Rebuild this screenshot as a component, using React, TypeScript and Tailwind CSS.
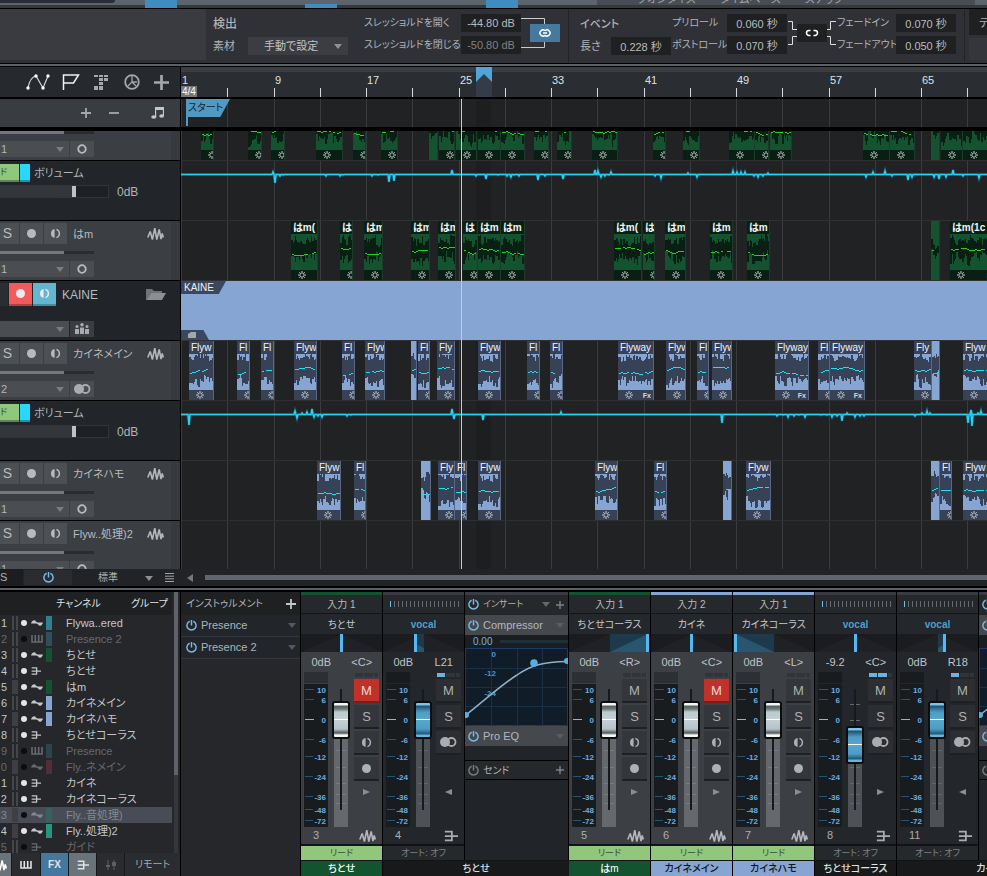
import { useId, useState, type ReactNode } from "react";
import clsx from "clsx";

const BAR_STEP = 46.25;
const GRID = Array.from({ length: 44 }, (_, i) => Math.round(i * BAR_STEP));

type Tone = "green" | "blue";
type ClipData = { x: number; w: number; solid?: boolean; fx?: boolean; label?: string };

const TONES = {
  green: { bg: "bg-[#0a1f13]", edge: "border-[#1d3a2a]", wave: "#14532f", pitch: "#1fd41f" },
  blue: { bg: "bg-[#374256]", edge: "border-[#56678a]", wave: "#86a5d2", pitch: "#19e3f0" },
};

const CHITOSE: ClipData[] = [
  { x: 20, w: 13 }, { x: 67, w: 14 }, { x: 90, w: 14 }, { x: 135, w: 27 }, { x: 172, w: 13 },
  { x: 200, w: 17 }, { x: 248, w: 9, solid: true }, { x: 258, w: 16 }, { x: 275, w: 21 }, { x: 297, w: 23 },
  { x: 320, w: 24 }, { x: 353, w: 15 }, { x: 376, w: 15 }, { x: 411, w: 26 }, { x: 472, w: 13 },
  { x: 502, w: 17 }, { x: 548, w: 26 }, { x: 574, w: 14 }, { x: 589, w: 22 }, { x: 682, w: 27 },
  { x: 709, w: 25 }, { x: 750, w: 9, solid: true }, { x: 760, w: 22 }, { x: 782, w: 26 },
];

const HAM: ClipData[] = [
  { x: 110, w: 27 }, { x: 159, w: 13 }, { x: 183, w: 19 }, { x: 230, w: 19 }, { x: 257, w: 18 },
  { x: 282, w: 15 }, { x: 297, w: 23 }, { x: 320, w: 24 }, { x: 433, w: 28 }, { x: 462, w: 12 },
  { x: 484, w: 21 }, { x: 529, w: 23 }, { x: 566, w: 23 }, { x: 750, w: 9, solid: true },
  { x: 769, w: 48, fx: true, label: "はm(1c" },
];

const KAINE_MAIN: ClipData[] = [
  { x: 8, w: 25 }, { x: 56, w: 13 }, { x: 80, w: 13 }, { x: 113, w: 23 }, { x: 161, w: 13 },
  { x: 184, w: 20 }, { x: 230, w: 6, solid: true }, { x: 237, w: 12 }, { x: 256, w: 18 }, { x: 297, w: 23 },
  { x: 346, w: 13 }, { x: 369, w: 13 }, { x: 437, w: 36, fx: true }, { x: 485, w: 20 }, { x: 516, w: 12 },
  { x: 531, w: 20 }, { x: 594, w: 34, fx: true }, { x: 637, w: 12 }, { x: 649, w: 35, fx: true },
  { x: 733, w: 18 }, { x: 751, w: 8, solid: true }, { x: 782, w: 30 },
];

const KAINE_HARMONY: ClipData[] = [
  { x: 136, w: 24 }, { x: 173, w: 12 }, { x: 240, w: 10, solid: true }, { x: 257, w: 17 }, { x: 274, w: 12 },
  { x: 297, w: 23 }, { x: 414, w: 23 }, { x: 473, w: 13 }, { x: 542, w: 9, solid: true }, { x: 565, w: 25 },
  { x: 750, w: 9, solid: true }, { x: 759, w: 12 }, { x: 782, w: 30 },
];

const VOLUME_1: number[][] = [
  [92, -2], [94, 9], [99, 2], [102, 1], [145, 2], [159, 2], [162, 1], [191, 2], [197, 1], [208, 8], [213, 7],
  [271, -4], [295, 2], [305, 5], [317, 1], [326, 2], [330, 3], [333, 1], [338, 2], [357, 6], [364, 2], [382, 5],
  [414, -4], [417, -3], [420, 3], [424, 2], [428, 1], [430, -2], [474, 2], [480, 4], [507, -1], [516, 3],
  [552, -3], [556, -2], [560, -2], [564, -2], [573, 2], [577, 3], [582, 2], [587, -1], [685, 3], [692, -2],
  [704, -3], [711, 2], [727, 6], [731, 3], [753, 3], [758, 5], [765, 3], [772, -4], [782, 2], [798, 4],
];

const VOLUME_2: number[][] = [
  [8, 11], [114, -3], [116, 4], [121, -1], [126, -2], [131, -5], [133, 3], [137, 2], [141, 3], [166, 2], [170, 1],
  [271, -5], [273, 5], [302, 6], [380, -2], [541, 9], [596, 2], [602, 1], [607, 3], [613, 2], [618, 1], [624, 3],
  [640, 1], [646, 1], [651, 3], [656, 2], [661, 7], [666, -1], [674, 3], [679, 2], [683, 2], [734, 2], [741, -1],
  [746, -3], [749, -1], [787, 9], [790, -4], [791, 12], [797, -1], [800, -3],
];

function noise(n: number) {
  const v = Math.sin(n * 127.1 + 3.7) * 43758.5453;
  return v - Math.floor(v);
}

function edgePath(seed: number, w: number, h: number, base: number, spread: number, bottom: boolean) {
  let d = bottom ? `M0 ${h}` : "M0 0";
  for (let i = 0; i < w; i++) {
    const env = base + noise(seed + Math.floor(i / 4)) * spread * 0.6;
    const len = Math.max(0, Math.round(env + (noise(seed * 3 + Math.floor(i / 1.5)) - 0.4) * spread));
    d += `V${bottom ? h - len : len}h1`;
  }
  return `${d}V${bottom ? h : 0}Z`;
}

function pitchPath(seed: number, w: number, mid: number) {
  let d = "";
  let y = mid + Math.round((noise(seed) - 0.5) * 6);
  for (let i = 1; i < w - 2; i += 2) {
    y += Math.round((noise(seed + i * 1.7) - 0.5) * 3);
    y = Math.min(mid + 4, Math.max(mid - 4, y));
    if (noise(seed * 2 + i) > 0.12) d += `M${i} ${y + 0.5}h2`;
  }
  return d;
}

function automationPath(points: number[][]) {
  let d = "M0 13.5";
  for (const [x, dy] of points) d += `L${x - 1} 13.5L${x} ${13 + dy}L${x + 1} 13.5`;
  return `${d}H3000`;
}

// short clips only have room for the first letters of the event name
function clipTitle(tone: Tone, w: number) {
  if (tone === "green") return w < 17 ? "は" : w < 26 ? "はm" : "はm(";
  if (w < 16) return "Fl";
  if (w < 20) return "Fly";
  return w < 32 ? "Flyw" : "Flyway";
}

function Gear() {
  return (
    <svg viewBox="0 0 8 8" className="h-2 w-2 shrink-0" fill="none" stroke="#c6cbd0">
      <circle cx="4" cy="4" r="2.2" />
      <path d="M4 0v1M4 7v1M0 4h1M7 4h1M1.2 1.2l.7.7M6.1 6.1l.7.7M1.2 6.8l.7-.7M6.1 1.9l.7-.7" />
    </svg>
  );
}

function WaveIcon({ className = "text-[#b4b7ba]" }: { className?: string }) {
  return (
    <svg viewBox="0 0 17 14" className={clsx("h-3.5 w-[17px] shrink-0", className)} fill="none" stroke="currentColor" strokeWidth="1.6" strokeLinejoin="bevel">
      <path d="M.8 10.500L3.200 4.500L5.400 12.500L7.800 1.200L9.800 12.500L12.200 2.500L14 12L15.200 6.500L16.300 10.500" />
    </svg>
  );
}

function BusIcon({ className = "h-3 w-4" }: { className?: string }) {
  return (
    <svg viewBox="0 0 16 12" className={clsx("shrink-0", className)} fill="none" stroke="currentColor" strokeWidth="2">
      <path d="M1 1h8v10H1M1 6h15" />
    </svg>
  );
}

function PianoIcon() {
  return (
    <svg viewBox="0 0 12 8" className="h-2 w-3 shrink-0" fill="none" stroke="currentColor" strokeWidth="1.6">
      <path d="M1 0v7h10V0M4.3 0v7M7.7 0v7" />
    </svg>
  );
}

function SineIcon() {
  return (
    <svg viewBox="0 0 12 8" className="h-2 w-3 shrink-0" fill="currentColor">
      <path d="M0 4.600C1 1 4 .4 5 2.400C5.600 3.600 6.400 3.400 12 3.400C11 7 8 7.600 7 5.600C6.400 4.400 5.600 4.600 0 4.600Z" />
    </svg>
  );
}

function MonitorIcon() {
  return (
    <svg viewBox="0 0 12 12" className="h-[11px] w-[11px]">
      <path d="M5 1.200a4.900 4.900 0 0 0 0 9.600Z" fill="currentColor" />
      <path d="M7 1.600a4.600 4.600 0 0 1 0 8.800" fill="none" stroke="currentColor" strokeWidth="1.500" />
    </svg>
  );
}

function StereoIcon({ stereo = true }: { stereo?: boolean }) {
  if (!stereo) {
    return (
      <svg viewBox="0 0 10 10" className="h-[10px] w-[10px]" fill="none" stroke="#b8bbbe" strokeWidth="1.800">
        <circle cx="5" cy="5" r="3.800" />
      </svg>
    );
  }
  return (
    <svg viewBox="0 0 17 10" className="h-[10px] w-[17px]">
      <circle cx="5" cy="5" r="5" fill="#aaadb0" />
      <circle cx="11.500" cy="5" r="4" fill="none" stroke="#aaadb0" strokeWidth="1.800" />
    </svg>
  );
}

function PowerIcon({ className = "text-[#78b9e4]" }: { className?: string }) {
  return (
    <svg viewBox="0 0 12 12" className={clsx("h-[11px] w-[11px] shrink-0", className)} fill="none" stroke="currentColor" strokeWidth="1.600">
      <path d="M4 1.400a5 5 0 1 0 4 0M6 0v6" />
    </svg>
  );
}

function PlusIcon({ className }: { className: string }) {
  return (
    <svg viewBox="0 0 10 10" className={clsx("shrink-0", className)} fill="none" stroke="currentColor" strokeWidth="1.800">
      <path d="M5 0v10M0 5h10" />
    </svg>
  );
}

function Caret({ className, color = "text-[#797c80]" }: { className?: string; color?: string }) {
  return (
    <svg viewBox="0 0 8 5" className={clsx("pointer-events-none h-[5px] w-2 shrink-0", color, className)} fill="currentColor">
      <path d="M0 0h8L4 5Z" />
    </svg>
  );
}

function LinkIcon({ broken = false }: { broken?: boolean }) {
  return (
    <svg viewBox="0 0 14 8" className="h-2 w-3.5" fill="none" stroke="currentColor" strokeWidth="1.500">
      {broken ? (
        <path d="M5.500 1.500H4a2.500 2.500 0 0 0 0 5h1.500M8.500 1.500H10a2.500 2.500 0 0 1 0 5H8.500" />
      ) : (
        <path d="M7 1.800A3 3 0 1 0 7 6.200M7 1.800A3 3 0 1 1 7 6.200M5 4h4" />
      )}
    </svg>
  );
}

function ValueField({ label, value, dim }: { label: string; value: string; dim?: boolean }) {
  return (
    <input
      aria-label={label}
      defaultValue={value}
      className={clsx(
        "h-[18px] w-[60px] shrink-0 bg-[#1f2022] text-center text-[11px] outline-none",
        dim ? "text-[#7e8185]" : "text-[#b9bcbf]",
      )}
    />
  );
}

function TopStrip() {
  return (
    <div className="flex h-[9px] shrink-0 items-start overflow-hidden border-b border-black bg-[#34393e] text-[11px]">
      <div className="flex h-[5px] w-full bg-[#5d656c]">
        <div className="h-[3px] w-[115px] shrink-0 rounded-br bg-[#2b2c36]" />
        <div className="ml-[30px] h-2 w-8 shrink-0 bg-[#3f8dc0]" />
        <div className="ml-32 h-2 w-8 shrink-0 border-t-4 border-[#5d656c] bg-[#3f8dc0]" />
        <div className="ml-[149px] h-2 w-8 shrink-0 bg-[#3f8dc0]" />
        <div className="ml-[79px] flex h-[5px] flex-1 items-end gap-6 bg-[#484d54] pl-10 leading-[12px] text-[#a0a4a8]">
          <span>クオンタイズ</span>
          <span>タイムベース</span>
          <span>スナップ</span>
        </div>
        <div className="h-[5px] w-3 shrink-0 bg-[#5d656c]" />
      </div>
    </div>
  );
}

function DetectionPanel() {
  return (
    <div className="flex h-[54px] shrink-0 overflow-hidden bg-[#303137] text-[11px] whitespace-nowrap text-[#b0b3b6]">
      <div className="mb-[3px] w-[206px] shrink-0 bg-[#3a3b40]" />
      <div className="flex w-[363px] shrink-0 border-r border-[#232428] pt-[5px]">
        <div className="ml-[7px] w-[151px] shrink-0">
          <h2 className="h-5 text-[12px] leading-5 font-medium">検出</h2>
          <div className="mt-[3px] flex items-center">
            <label htmlFor="material" className="w-[35px]">素材</label>
            <div className="relative">
              <select id="material" className="block h-[18px] w-[100px] appearance-none bg-[#3c3d42] pl-4 text-[#c0c3c6] outline-none">
                <option>手動で設定</option>
              </select>
              <Caret className="absolute top-[7px] right-1.5" color="text-[#8f9295]" />
            </div>
          </div>
        </div>
        <div className="flex w-[97px] shrink-0 flex-col gap-1 text-[10px] leading-[18px]">
          <span>スレッショルドを開く</span>
          <span>スレッショルドを閉じる</span>
        </div>
        <div className="flex flex-col gap-1">
          <ValueField label="スレッショルドを開く" value="-44.80 dB" />
          <ValueField label="スレッショルドを閉じる" value="-50.80 dB" dim />
        </div>
        <div className="relative h-10 w-10">
          <svg viewBox="0 0 40 40" className="h-10 w-10" fill="none" stroke="#c9cbcd">
            <path d="M0 4.500h23.500v29H0" />
          </svg>
          <button aria-label="リンク" className="absolute top-[10px] left-[9px] flex h-[18px] w-[30px] items-center justify-center bg-[#47799f] text-white">
            <LinkIcon />
          </button>
        </div>
      </div>
      <div className="flex w-[396px] shrink-0 border-r border-[#232428] pt-[5px] pl-[11px]">
        <div className="w-[92px] shrink-0">
          <h2 className="h-5 text-[11px] leading-5 font-medium">イベント</h2>
          <div className="mt-[3px] flex items-center">
            <span className="w-[31px]">長さ</span>
            <ValueField label="長さ" value="0.228 秒" />
          </div>
        </div>
        <div className="flex w-[55px] shrink-0 flex-col gap-1 text-[10px] leading-[18px]">
          <span>プリロール</span>
          <span>ポストロール</span>
        </div>
        <div className="flex flex-col gap-1">
          <ValueField label="プリロール" value="0.060 秒" />
          <ValueField label="ポストロール" value="0.070 秒" />
        </div>
        <div className="relative h-10 w-[50px] shrink-0">
          <svg viewBox="0 0 50 40" className="h-10 w-[50px]" fill="none" stroke="#dcdee0">
            <path d="M1 7.500h4.500v8H10M1 30.500h4.500v-8H10M49 7.500h-5.500v8H39M49 30.500h-5.500v-8H39" />
          </svg>
          <button aria-label="リンク解除" className="absolute top-[10px] left-[10px] flex h-[18px] w-[30px] items-center justify-center bg-[#1f2022] text-white">
            <LinkIcon broken />
          </button>
        </div>
        <div className="flex w-[59px] shrink-0 flex-col gap-1 text-[10px] leading-[18px]">
          <span>フェードイン</span>
          <span>フェードアウト</span>
        </div>
        <div className="flex flex-col gap-1">
          <ValueField label="フェードイン" value="0.070 秒" />
          <ValueField label="フェードアウト" value="0.050 秒" />
        </div>
      </div>
      <div className="flex flex-1 flex-col gap-[3px] overflow-hidden pl-1">
        <button className="h-[26px] w-20 bg-[#1f2022] pt-0.5 pl-2.5 text-left">デフォルト</button>
        <button aria-label="適用" className="h-[22px] w-20 bg-[#35363b]" />
      </div>
    </div>
  );
}

function GridLines() {
  return (
    <svg className="absolute inset-0 h-full w-full" stroke="#3a3b3e" shapeRendering="crispEdges">
      {GRID.map((x) => (
        <path key={x} d={`M${x + 0.5} 0v80`} />
      ))}
      <rect x="295" y="0" width="15" height="80" fill="#1d1e20" stroke="none" />
    </svg>
  );
}

function Ruler() {
  return (
    <>
      <div className="flex h-8 shrink-0 border-b-2 border-black">
        <div className="flex w-[181px] shrink-0 items-center border-r border-black bg-[#26292d] pl-[26px] text-[#a5a8ab]">
          <button aria-label="オートメーション" className="w-9">
            <svg viewBox="0 0 24 16" className="h-4 w-6" fill="none" stroke="#d2d5d8" strokeWidth="1.200">
              <path d="M2 14C3 8 5 3 10 2L17 14L22 2" />
              <g fill="#fff" stroke="none">
                <circle cx="2" cy="14" r="1.700" />
                <circle cx="10" cy="2" r="1.700" />
                <circle cx="17" cy="14" r="1.700" />
                <circle cx="22" cy="2" r="1.700" />
              </g>
            </svg>
          </button>
          <button aria-label="マーカー" className="w-8">
            <svg viewBox="0 0 18 16" className="h-4 w-[18px]" fill="none" stroke="#f0f1f2" strokeWidth="1.500">
              <path d="M1.500 16V1H16.500L11.500 9H1.500" />
            </svg>
          </button>
          <button aria-label="アレンジ" className="w-[30px]">
            <svg viewBox="0 0 14 15" className="h-[15px] w-3.5" fill="currentColor">
              <path d="M0 0h4v2H0zM5 0h4v2H5zM10 0h4v2h-4zM5 3h4v3H5zM10 3h4v3h-4zM5 7h4v3H5zM0 11h4v4H0zM5 11h4v4H5z" />
            </svg>
          </button>
          <button aria-label="テンポ" className="w-[30px]">
            <svg viewBox="0 0 16 16" className="h-4 w-4" fill="none" stroke="currentColor" strokeWidth="1.800">
              <circle cx="8" cy="8" r="6.800" />
              <path d="M8 2v6L4 12M8 8h5M8 8l4 4" strokeWidth="1.300" />
            </svg>
          </button>
          <button aria-label="追加">
            <PlusIcon className="h-[15px] w-[15px]" />
          </button>
        </div>
        <div className="relative flex-1 overflow-hidden border-t-[5px] border-[#3a3d41] bg-[#2a2d32]">
          {GRID.map((x, i) => (
            <span key={x} className="absolute bottom-0 h-[9px] w-px bg-[#d9dbdd]" style={{ left: x }}>
              {i % 2 === 0 && (
                <span className="absolute bottom-[9px] left-px text-[11px] leading-4 text-[#dfe1e3]">{i * 4 + 1}</span>
              )}
            </span>
          ))}
          <span className="absolute bottom-0 left-0 h-[11px] bg-[#76777a] px-px text-[10px] leading-[11px] font-medium text-white">4/4</span>
        </div>
      </div>
      <div className="flex h-8 shrink-0 border-b-4 border-black">
        <div className="flex w-[181px] shrink-0 items-center border-r border-black bg-[#393c40] pl-[81px] text-[#a5a8ab]">
          <button aria-label="拡大" className="w-7">
            <PlusIcon className="h-2.5 w-2.5" />
          </button>
          <button aria-label="縮小" className="w-[42px]">
            <svg viewBox="0 0 10 10" className="h-2.5 w-2.5" stroke="currentColor" strokeWidth="1.800">
              <path d="M0 5h10" />
            </svg>
          </button>
          <button aria-label="音符">
            <svg viewBox="0 0 13 12" className="h-3 w-[13px]" fill="#c4c6c9">
              <path d="M4 0h9v9h-1.200V3H5.200v7H4z" />
              <ellipse cx="2.800" cy="10" rx="2.600" ry="1.800" />
              <ellipse cx="10.600" cy="9" rx="2.400" ry="1.800" />
            </svg>
          </button>
        </div>
        <div className="relative flex-1 overflow-hidden bg-[#212224]">
          <GridLines />
          <div className="absolute top-0 left-[5px] h-[18px] w-11 bg-[#5199c2] pl-0.5 text-[10px] leading-[18px] text-[#14242e] [clip-path:polygon(0_0,100%_0,78%_100%,0_100%)]">
            スタート
          </div>
          <div className="absolute top-0 left-[5px] h-[27px] w-0.5 bg-[#5199c2]" />
        </div>
      </div>
    </>
  );
}

function Clip({ clip, tone }: { clip: ClipData; tone: Tone }) {
  const t = TONES[tone];
  const seed = clip.x + (tone === "green" ? 11 : 5);
  const green = tone === "green";
  return (
    <div
      className={clsx("absolute top-0 h-[59px] overflow-hidden border-r", t.bg, t.edge)}
      style={{ left: clip.x, width: clip.w }}
    >
      {clip.solid ? (
        <svg width={clip.w} height="59" shapeRendering="crispEdges">
          <path d={edgePath(seed, clip.w, 59, green ? 20 : 12, 8, false)} fill={t.wave} />
          <path d={edgePath(seed + 9, clip.w, 59, 20, 12, true)} fill={t.wave} />
          <path d={pitchPath(seed, clip.w, 30)} stroke={t.pitch} />
        </svg>
      ) : (
        <>
          <p className={clsx("h-[13px] pl-0.5 text-[10px] leading-[13px] whitespace-nowrap text-[#f2f4f6]", green && "font-semibold")}>
            {clip.label ?? clipTitle(tone, clip.w)}
          </p>
          <svg width={clip.w} height="36" className="block" shapeRendering="crispEdges">
            <path d={edgePath(seed, clip.w, 36, green ? 3 : 0, green ? 9 : 7, false)} fill={t.wave} />
            <path d={edgePath(seed + 9, clip.w, 36, green ? 7 : 5, green ? 11 : 10, true)} fill={t.wave} />
            <path d={pitchPath(seed, clip.w, 17)} stroke={t.pitch} />
          </svg>
          <div className="flex h-[10px] items-center justify-between pr-0.5 pl-[7px] text-[7px] leading-none font-bold text-[#d4d8dc]">
            <Gear />
            {clip.fx && <span>Fx</span>}
          </div>
        </>
      )}
    </div>
  );
}

function TrackRow({ header, children, clip }: { header: ReactNode; children?: ReactNode; clip?: "top" | "bottom" }) {
  return (
    <div
      className={clsx(
        "flex shrink-0 overflow-hidden",
        clip === "top" && "h-[30px] items-end",
        clip === "bottom" && "h-12 items-start",
        !clip && "h-[60px]",
      )}
    >
      <div className="h-[60px] w-[181px] shrink-0 overflow-hidden border-r border-b border-black">{header}</div>
      <div className="relative h-[60px] flex-1 overflow-hidden border-b border-[#2f3032] bg-[#212224]">
        <GridLines />
        {children}
      </div>
    </div>
  );
}

function ChannelSelect({ label, value }: { label: string; value: string }) {
  return (
    <div className="relative">
      <select aria-label={label} className="block h-4 w-[69px] appearance-none bg-[#4a4d51] pl-px text-[11px] leading-4 text-[#b3b6b9] outline-none">
        <option>{value}</option>
      </select>
      <Caret className="absolute top-[6px] right-[5px]" />
    </div>
  );
}

function TrackHeader({ name, input, stereo = false }: { name: string; input: string; stereo?: boolean }) {
  return (
    <div className="flex h-full bg-[#3b3e43] text-[#b8bbbe]">
      <div className="flex-1 overflow-hidden pt-0.5">
        <div className="flex h-[21px] items-center gap-px">
          <button className="h-full w-[19px] bg-[#4c4f53] pr-1 text-[14px] leading-[21px]" aria-label={`${name} ソロ`}>S</button>
          <button className="flex h-full w-[23px] items-center justify-center bg-[#4c4f53]" aria-label={`${name} 録音`}>
            <span className="h-[9px] w-[9px] rounded-full bg-current" />
          </button>
          <button className="flex h-full w-[23px] items-center justify-center bg-[#4c4f53]" aria-label={`${name} モニター`}>
            <MonitorIcon />
          </button>
          <span className="ml-[5px] w-[73px] shrink-0 text-[11px] leading-5 whitespace-nowrap">{name}</span>
          <WaveIcon />
        </div>
        <div className="mt-[7px] h-[3px] w-[94px] bg-[#2a2c30]">
          <div className="h-full w-16 bg-[#74777c]" />
        </div>
        <div className="mt-[7px] flex gap-px">
          <ChannelSelect label={`${name} 入力`} value={input} />
          <button className="flex h-4 w-6 items-center justify-center bg-[#4a4d51]" aria-label={`${name} チャンネル`}>
            <StereoIcon stereo={stereo} />
          </button>
        </div>
      </div>
      <div className="w-[9px] shrink-0 bg-[#36393d]" />
    </div>
  );
}

function VolumeHeader() {
  const id = useId();
  return (
    <div className="h-full bg-[#22262b] pt-[3px] text-[#b0b3b6]">
      <div className="flex h-[18px] items-center">
        <button className="h-full w-[19px] border-b-2 border-[#5f8558] bg-[#90c77d] pr-3 text-[9px] leading-none text-[#33502c]">ド</button>
        <span className="ml-px h-full w-[10px] border-b-2 border-[#1c96b4] bg-[#29d8ff]" />
        <label htmlFor={id} className="pl-1 text-[11px] leading-[18px]">ボリューム</label>
      </div>
      <div className="mt-[3px] flex h-[13px] items-center gap-2">
        <input
          id={id}
          type="range"
          defaultValue={69}
          className="h-[13px] w-[109px] appearance-none border border-l-0 border-[#31353a] bg-linear-to-r from-[#33373b] from-68% to-[#1d2125] to-68% outline-none [&::-webkit-slider-thumb]:h-[11px] [&::-webkit-slider-thumb]:w-1 [&::-webkit-slider-thumb]:appearance-none [&::-webkit-slider-thumb]:bg-[#c0c2c4]"
        />
        <span className="text-[12px] leading-3">0dB</span>
      </div>
    </div>
  );
}

function FolderHeader() {
  return (
    <div className="h-full bg-[#212529] pt-0.5 text-[#b8bbbe]">
      <div className="flex h-[23px] items-center gap-px">
        <button className="h-full w-2 overflow-hidden bg-[#2a2d31]" aria-label="KAINE ソロ" />
        <button className="flex h-full w-[23px] items-center justify-center border-b-2 border-[#b04244] bg-[#f35a5c] text-[#e8eaec]" aria-label="KAINE 録音">
          <span className="h-[9px] w-[9px] rounded-full bg-current" />
        </button>
        <button className="flex h-full w-[23px] items-center justify-center border-b-2 border-[#4a8a9f] bg-[#63b5d0] text-[#e8eaec]" aria-label="KAINE モニター">
          <MonitorIcon />
        </button>
        <span className="ml-[5px] w-[83px] shrink-0 text-[12px]">KAINE</span>
        <svg viewBox="0 0 20 13" className="h-[13px] w-5" fill="#8b8e92">
          <path d="M0 12V1h6l2 2h8v2H5L2 12Z" fill="#6f7276" />
          <path d="M5 5h15l-4 7H1Z" />
        </svg>
      </div>
      <div className="mt-[15px] flex gap-px">
        <ChannelSelect label="KAINE 出力" value=" " />
        <button className="flex h-4 w-6 items-center justify-center bg-[#3a3d41]" aria-label="グループ">
          <svg viewBox="0 0 14 12" className="h-3 w-3.5" fill="#a9acaf">
            <circle cx="2" cy="3.500" r="1.500" />
            <circle cx="7" cy="1.800" r="1.800" />
            <circle cx="12" cy="3.500" r="1.500" />
            <path d="M0 6h4v5H0zM5 4.500h4V11H5zM10 6h4v5h-4z" />
          </svg>
        </button>
      </div>
    </div>
  );
}

function Automation({ points }: { points: number[][] }) {
  return (
    <svg className="absolute inset-0 h-full w-full" fill="none">
      <path d={automationPath(points)} stroke="#12718a" strokeWidth="3" opacity="0.5" />
      <path d={automationPath(points)} stroke="#27d0f5" strokeWidth="1.500" />
    </svg>
  );
}

function Tracks() {
  return (
    <div className="relative flex shrink-0 flex-col overflow-hidden">
      <Ruler />
      <TrackRow clip="top" header={<TrackHeader name="ちとせ" input="1" />}>
        {CHITOSE.map((c) => <Clip key={c.x} clip={c} tone="green" />)}
      </TrackRow>
      <TrackRow header={<VolumeHeader />}>
        <Automation points={VOLUME_1} />
      </TrackRow>
      <TrackRow header={<TrackHeader name="はm" input="1" />}>
        {HAM.map((c) => <Clip key={c.x} clip={c} tone="green" />)}
      </TrackRow>
      <TrackRow header={<FolderHeader />}>
        <div className="absolute inset-0 flex flex-col justify-between bg-[#86a5d2]">
          <span className="h-[13px] w-[45px] bg-[#3b475e] pl-[3px] text-[10px] leading-[13px] text-[#eef0f2] [clip-path:polygon(0_0,100%_0,84%_100%,0_100%)]">
            KAINE
          </span>
          <span className="flex h-[10px] w-7 items-center bg-[#3b475e] pl-[7px] [clip-path:polygon(0_0,80%_0,100%_100%,0_100%)]">
            <svg viewBox="0 0 8 6" className="h-1.5 w-2" fill="#a3a7ac">
              <path d="M0 2l3-2h5v6H0z" />
            </svg>
          </span>
        </div>
      </TrackRow>
      <TrackRow header={<TrackHeader name="カイネメイン" input="2" stereo />}>
        {KAINE_MAIN.map((c) => <Clip key={c.x} clip={c} tone="blue" />)}
      </TrackRow>
      <TrackRow header={<VolumeHeader />}>
        <Automation points={VOLUME_2} />
      </TrackRow>
      <TrackRow header={<TrackHeader name="カイネハモ" input="1" />}>
        {KAINE_HARMONY.map((c) => <Clip key={c.x} clip={c} tone="blue" />)}
      </TrackRow>
      <TrackRow clip="bottom" header={<TrackHeader name="Flyw..処理)2" input="1" />} />
      <div className="pointer-events-none absolute top-8 bottom-0 left-[461px] w-px bg-[#c9cbc9]" />
      <svg viewBox="0 0 16 30" className="pointer-events-none absolute top-0 left-[476px] h-[30px] w-4">
        <path d="M0 0h16v30H0z" fill="#353c49" />
        <path d="M0 0h16v15L8 7L0 15Z" fill="#4ea6d8" />
      </svg>
    </div>
  );
}

function BottomBar() {
  return (
    <div className="flex h-[17px] shrink-0 items-center bg-[#212326] text-[11px] text-[#b0b3b6]">
      <button className="h-full w-[23px] bg-[#1b1d20] pr-[18px] text-[11px]">S</button>
      <button aria-label="電源" className="ml-px flex h-[15px] w-12 items-center justify-center bg-[#2a2c30]">
        <PowerIcon />
      </button>
      <div className="relative ml-[26px]">
        <select aria-label="表示サイズ" className="block h-4 w-[60px] appearance-none bg-transparent text-[10px] text-[#b0b3b6] outline-none">
          <option>標準</option>
        </select>
        <Caret className="absolute top-[6px] right-[5px]" color="text-[#8d9093]" />
      </div>
      <svg viewBox="0 0 9 9" className="ml-[7px] h-[9px] w-[9px] shrink-0" stroke="#a0a3a6" strokeWidth="1">
        <path d="M0 .5h9M0 3.200h9M0 5.800h9M0 8.500h9" />
      </svg>
      <svg viewBox="0 0 6 8" className="ml-[13px] h-2 w-1.5 shrink-0" fill="#74777e">
        <path d="M6 0v8L0 4Z" />
      </svg>
      <div className="ml-3 h-[5px] flex-1 bg-[#63656e]" />
    </div>
  );
}

type MixRow = { n: string; kind: "audio" | "bus" | "inst"; name: string; chip?: string; off?: boolean; wide?: boolean; selected?: boolean };

const MIX_ROWS: MixRow[] = [
  { n: "1", kind: "audio", name: "Flywa..ered", chip: "bg-[#2f8191]" },
  { n: "2", kind: "inst", name: "Presence 2", chip: "bg-[#2f5059]", off: true },
  { n: "3", kind: "audio", name: "ちとせ", chip: "bg-[#14532f]" },
  { n: "4", kind: "bus", name: "ちとせ" },
  { n: "5", kind: "audio", name: "はm", chip: "bg-[#14532f]", wide: true },
  { n: "6", kind: "audio", name: "カイネメイン", chip: "bg-[#86a5d2]" },
  { n: "7", kind: "audio", name: "カイネハモ", chip: "bg-[#86a5d2]", wide: true },
  { n: "8", kind: "bus", name: "ちとせコーラス" },
  { n: "9", kind: "inst", name: "Presence", chip: "bg-[#2b454f]", off: true },
  { n: "10", kind: "audio", name: "Fly..ネメイン", chip: "bg-[#552d39]", off: true, wide: true },
  { n: "11", kind: "bus", name: "カイネ" },
  { n: "12", kind: "bus", name: "カイネコーラス" },
  { n: "13", kind: "audio", name: "Fly..音処理)", chip: "bg-[#38605f]", off: true, wide: true, selected: true },
  { n: "14", kind: "audio", name: "Fly..処理)2", chip: "bg-[#27957d]", wide: true },
  { n: "15", kind: "bus", name: "ガイド", off: true },
];

function ChannelList() {
  return (
    <div className="flex w-[181px] shrink-0 flex-col border-r border-black bg-[#26272b] text-[11px]">
      <div className="flex min-h-0 flex-1">
        <div className="min-w-0 flex-1 overflow-hidden">
          <div className="flex h-[23px] items-center bg-[#1e2022] pl-14 text-[10px] leading-[23px] text-[#dfe1e3]">
            <span className="w-[75px]">チャンネル</span>
            <span>グループ</span>
          </div>
          <ul>
            {MIX_ROWS.map((r) => (
              <li
                key={r.n}
                className={clsx(
                  "flex h-4 items-center overflow-hidden whitespace-nowrap",
                  r.selected && "bg-[#474c57]",
                  r.selected ? "text-[#84878d]" : r.off ? "text-[#66696d]" : "text-[#c3c6c9]",
                )}
              >
                <span className="ml-px flex w-1.5 shrink-0 justify-end overflow-hidden">{r.n}</span>
                <span className={clsx("ml-[5px] h-3.5 w-1.5 shrink-0 border-[#44464b]", r.wide ? "bg-[#3d3f44]" : "border-x-2")} />
                <span className={clsx("ml-[3px] h-1.5 w-1.5 shrink-0 rounded-full", r.off ? "bg-[#0c0d0e]" : "bg-[#e2e4e6]")} />
                <span className="ml-1 flex w-[15px] shrink-0">
                  {r.kind === "audio" && <SineIcon />}
                  {r.kind === "inst" && <PianoIcon />}
                  {r.kind === "bus" && <BusIcon className="h-2 w-2.5" />}
                </span>
                <span className={clsx("h-3.5 w-1.5 shrink-0", r.chip)} />
                <span className="pl-3.5 leading-4">{r.name}</span>
              </li>
            ))}
          </ul>
        </div>
        <div className="mx-0.5 w-1 shrink-0 bg-[#35363c]">
          <div className="h-[70%] bg-[#60626b]" />
        </div>
      </div>
      <div className="flex h-[23px] shrink-0 gap-px bg-[#17181a] text-[#e0e2e4]">
        <button aria-label="オーディオ" className="flex w-[11px] items-center overflow-hidden bg-[#69747a]">
          <WaveIcon className="-ml-2.5 text-white" />
        </button>
        <button aria-label="インストゥルメント" className="flex w-7 items-center justify-center bg-[#2a2c30]"><PianoIcon /></button>
        <button className="w-[27px] bg-[#4379a0] text-[10px] font-bold">FX</button>
        <button aria-label="バス" className="flex w-[27px] items-center justify-center bg-[#69747a]"><BusIcon className="h-2.5 w-3" /></button>
        <button aria-label="フェーダー" className="flex w-[27px] items-center justify-center bg-[#2a2c30] text-[#5c5f63]">
          <svg viewBox="0 0 12 10" className="h-2.5 w-3" fill="currentColor">
            <path d="M2.500 0h1v10h-1zM1 5h4v2H1zM8.500 0h1v10h-1zM7 2h4v4H7z" />
          </svg>
        </button>
        <button className="flex-1 bg-[#2a2c30] text-[10px] text-[#a6a9ac]">リモート</button>
      </div>
    </div>
  );
}

function Instruments() {
  return (
    <div className="w-[119px] shrink-0 bg-[#26272b] text-[11px] text-[#b0b3b6]">
      <div className="flex h-[23px] items-center justify-between bg-[#1e2022] pr-1 pl-[5px] text-[10px] whitespace-nowrap">
        <span>インストゥルメント</span>
        <button aria-label="インストゥルメント追加"><PlusIcon className="h-2.5 w-2.5 text-[#c5c8ca]" /></button>
      </div>
      {["Presence", "Presence 2"].map((name) => (
        <div key={name} className="flex h-[22px] items-center border-b border-[#33363a] bg-[#22262a] pr-1 pl-[5px]">
          <PowerIcon />
          <span className="flex-1 pl-1">{name}</span>
          <Caret color="text-[#55585c]" />
        </div>
      ))}
    </div>
  );
}

const SCALE = [
  ["10", 6], ["6", 16], ["0", 36], ["-6", 56], ["-12", 73], ["-24", 93], ["-36", 113], ["-48", 126], ["-72", 137],
] as const;

function MeterScale() {
  return (
    <svg viewBox="0 0 24 143" className="h-[143px] w-6 bg-[#191c1f]">
      {SCALE.map(([label, y]) => (
        <g key={label}>
          <path d={`M1 ${y - 0.5}h${label.length > 2 ? 8 : 9}`} stroke={label === "0" ? "#9fb3c0" : "#24566f"} />
          <text x="22" y={y + 3} textAnchor="end" fontSize="8" fontWeight="bold" fill="#6aaee0">
            {label}
          </text>
        </g>
      ))}
    </svg>
  );
}

function Fader({ label, level, bus }: { label: string; level: number; bus: boolean }) {
  const top = (1 - level / 100) * 105 + 19;
  return (
    <div className="relative h-[143px] w-[18px]">
      <svg viewBox="0 0 18 143" className="h-[143px] w-[18px]" shapeRendering="crispEdges">
        <rect x="2" y={top} width="14" height={143 - top} fill={bus ? "#4e5155" : "#65686c"} />
        <path d="M4 20h10M4 36h10M4 66h10M4 83h10M4 99h10M4 110h10M4 119h10" stroke={bus ? "#63666a" : "#787b7f"} />
        <rect x="8" y="5" width="2" height="121" fill="#17191b" />
      </svg>
      <input
        type="range"
        aria-label={label}
        defaultValue={level}
        className={clsx(
          "absolute inset-0 h-[143px] w-[18px] appearance-none bg-transparent outline-none [direction:rtl] [writing-mode:vertical-lr]",
          "[&::-webkit-slider-thumb]:h-[38px] [&::-webkit-slider-thumb]:w-[18px] [&::-webkit-slider-thumb]:appearance-none [&::-webkit-slider-thumb]:rounded-[3px] [&::-webkit-slider-thumb]:border-2 [&::-webkit-slider-thumb]:border-[#0c0d0e]",
          bus
            ? "[&::-webkit-slider-thumb]:bg-[linear-gradient(#7cc3e8_0,#7cc3e8_2px,#1f4f6b_3px,#4d9cc4_9px,#57a6cc_16px,#fff_16px,#fff_17px,#57a6cc_17px,#4d9cc4_26px,#1f5675_31px,#6ab4da_32px)]"
            : "[&::-webkit-slider-thumb]:bg-[linear-gradient(#f4f6f6_0,#f4f6f6_2px,#54605f_3px,#6d7878_6px,#bccad1_9px,#c4d0d6_16px,#fff_16px,#fff_17px,#c4d0d6_17px,#b6c3ca_26px,#4f5959_30px,#f4f6f6_32px)]",
        )}
      />
    </div>
  );
}

type Strip = {
  n: string;
  input?: string;
  title: string;
  pan: number;
  gain: string;
  panText: string;
  level: number;
  leds?: number;
  muted?: boolean;
  left?: boolean;
  color: string;
  footer?: string;
  footerClass?: string;
};

function PanView({ pan }: { pan: number }) {
  const x = Math.round(41 + pan * 38);
  return (
    <svg viewBox="0 0 81 18" className="block h-[18px] w-full bg-[#1a1c1f]" preserveAspectRatio="none">
      <path d="M0 18L41 0L81 18Z" fill="#1f2124" />
      {pan !== 0 && <path d={`M41 0H${x}V18H41Z`} fill="#1d3a4c" />}
      {pan !== 0 && <path d={Math.abs(pan) === 1 ? `M41 18L${x} 0V18Z` : `M41 14L${x} 10V18H41Z`} fill="#28566f" />}
      <rect x={x - 2} y="0" width="3" height="18" fill="#56b8f2" />
    </svg>
  );
}

function ChannelStrip({ s }: { s: Strip }) {
  const bus = !s.input;
  const [muted, setMuted] = useState(!!s.muted);
  const btn = clsx("flex h-6 w-full items-center justify-center border-b-2 border-[#1e2023]", bus ? "bg-[#2c2e32]" : "bg-[#33363a]");
  return (
    <div className="w-[82px] shrink-0 border-r border-black">
      <div className={clsx("h-[3px]", s.color)} />
      <div className="flex h-[19px] items-center justify-center border-b border-[#131416] bg-[#26292c] text-[10px] text-[#b9bcbf]">
        {bus ? (
          <svg viewBox="0 0 70 6" className="h-1.5 w-[70px]" shapeRendering="crispEdges">
            {Array.from({ length: 18 }, (_, i) => (
              <rect key={i} x={1 + i * 4} y="0" width="1" height="6" fill={i ? "#66696d" : "#6fc0ee"} />
            ))}
          </svg>
        ) : (
          s.input
        )}
      </div>
      <div className={clsx("flex h-5 items-center justify-center overflow-hidden bg-[#24272b] whitespace-nowrap", bus ? "text-[10px] font-bold text-[#4f9fc8]" : "text-[10px] text-[#c6c9cb]")}>
        {s.title}
      </div>
      <PanView pan={s.pan} />
      <div className={clsx("border-b border-[#111213]", bus ? "bg-[#23262a]" : "bg-[#3c3f44]")}>
        <div className="grid h-5 grid-cols-2 place-items-center text-[11px] text-[#c0c3c5]">
          <span>{s.gain}</span>
          <span>{s.panText}</span>
        </div>
        <div className="flex gap-1 pl-[3px]">
          <div className="flex flex-col gap-px">
            <div className={clsx("h-[11px] w-6", bus ? "bg-[#191b1e]" : "bg-[#2c2f34]")} />
            <MeterScale />
          </div>
          <div className="pt-3">
            <Fader label={`${s.title} ${s.n} フェーダー`} level={s.level} bus={bus} />
          </div>
          <div className="w-[25px] text-[13px] leading-none text-[#aeb1b4]">
            <div className="mb-0.5 flex gap-px px-px pt-px">
              {[0, 1, 2].map((i) => (
                <span key={i} className={clsx("h-1", i < 2 ? "flex-2" : "flex-1", i < (s.leds ?? 0) ? "bg-[#6fb2de]" : "bg-[#313438]")} />
              ))}
            </div>
            <div className="flex flex-col gap-0.5">
              <button
                aria-pressed={muted}
                onClick={() => setMuted(!muted)}
                className={clsx(
                  "flex h-6 w-full items-center justify-center border-b-2",
                  muted ? "border-[#7b1d18] bg-[#c0312a] text-[#f0d8d6]" : "border-[#1e2023]",
                  !muted && (bus ? "bg-[#2c2e32]" : "bg-[#33363a]"),
                )}
              >
                M
              </button>
              <button className={btn}>S</button>
              <button className={btn} aria-label={bus ? "ステレオ" : "モニター"}>
                {bus ? <StereoIcon /> : <MonitorIcon />}
              </button>
              {bus ? (
                <span className="h-6" />
              ) : (
                <button className={btn} aria-label="録音">
                  <span className="h-[9px] w-[9px] rounded-full bg-current" />
                </button>
              )}
            </div>
            <svg viewBox="0 0 7 6" className={clsx("mx-auto mt-2 h-1.5 w-[7px]", s.left && "rotate-180")} fill="#8c8f92">
              <path d="M0 0L7 3L0 6Z" />
            </svg>
          </div>
        </div>
        <div className="flex h-[17px] items-center justify-between pr-1.5 pl-3 text-[11px] text-[#abaeb1]">
          <span>{s.n}</span>
          {bus ? <BusIcon className="h-3 w-3.5" /> : <WaveIcon />}
        </div>
      </div>
      <button
        className={clsx(
          "mt-px block h-[14px] w-full text-[9px] leading-[14px]",
          bus ? "bg-[#26292c] text-[#7d8083]" : "bg-[#90c77d] text-[#33502c]",
        )}
      >
        {bus ? "オート: オフ" : "リード"}
      </button>
      {s.footer && (
        <div className={clsx("mt-px h-4 text-center text-[10px] leading-4 font-medium whitespace-nowrap", s.footerClass)}>{s.footer}</div>
      )}
    </div>
  );
}

function InsertSlot({ name }: { name: string }) {
  return (
    <div className="flex h-5 items-center bg-[#45494e] pr-1 pl-[3px] text-[#b4b7ba]">
      <PowerIcon />
      <span className="flex-1 pl-1">{name}</span>
      <Caret color="text-[#5a5e63]" />
    </div>
  );
}

function Inserts() {
  return (
    <div className="w-[104px] shrink-0 border-r border-black bg-[#212529] text-[11px] text-[#b0b3b6]">
      <div className="h-[3px] bg-[#3b3c43]" />
      <div className="flex h-[19px] items-center bg-[#26292c] pr-1 pl-[3px]">
        <PowerIcon />
        <span className="flex-1 pl-1 text-[9px]">インサート</span>
        <Caret className="mr-1.5" color="text-[#65686c]" />
        <PlusIcon className="h-2 w-2 text-[#7d8084]" />
      </div>
      <div className="mt-px">
        <InsertSlot name="Compressor" />
      </div>
      <div className="flex h-[13px] items-center gap-2 bg-[#1b1e21] pl-2 text-[10px] leading-none text-[#6cb4e2]">
        <span>0.00</span>
        <span className="h-[3px] flex-1 bg-[#1e3038]" />
      </div>
      <svg viewBox="0 0 103 78" className="block h-[78px] w-[103px] bg-[#101c28]" fill="none">
        <path d="M52.500 0v78M77.500 0v78M0 20.500h103M0 39.500h103M0 58.500h103M26.500 0v78" stroke="#193049" />
        <path d="M.5 .5h102v77H.5z" stroke="#1c3a63" />
        <g fontSize="8" fontWeight="bold" fill="#4d93d0" textAnchor="end">
          <text x="31" y="9">0</text>
          <text x="31" y="28">-12</text>
          <text x="31" y="48">-24</text>
        </g>
        <path d="M1 67C20 52 36 37 52 27C66 17 78 14 102 13.500" stroke="#8fb0c6" strokeWidth="1.500" />
        <g fill="#58aee0">
          <circle cx="69" cy="15" r="3.800" />
          <circle cx="1" cy="67" r="3" />
          <circle cx="102" cy="13" r="3" />
        </g>
      </svg>
      <InsertSlot name="Pro EQ" />
      <div className="mt-[14px] flex h-5 items-center border-y border-black bg-[#26292c] pr-1 pl-[3px]">
        <PowerIcon className="text-[#77797c]" />
        <span className="flex-1 pl-1 text-[10px]">センド</span>
        <PlusIcon className="h-2 w-2 text-[#7d8084]" />
      </div>
    </div>
  );
}

const GREEN = "bg-[#14532f]";
const BLUE = "bg-[#86a5d2]";
const GREY = "bg-[#3b3c43]";

function BusGroup({ s, footer }: { s: Strip; footer: string }) {
  return (
    <div className="flex shrink-0 flex-col">
      <div className="flex h-[268px]">
        <ChannelStrip s={s} />
        <Inserts />
      </div>
      <div className="mt-px h-4 bg-[#18191b] text-center text-[10px] leading-4 font-medium text-[#dfe1e3]">{footer}</div>
    </div>
  );
}

function Mixer() {
  return (
    <div className="flex min-h-0 flex-1 overflow-hidden bg-[#131416]">
      <ChannelList />
      <Instruments />
      <div className="flex min-w-0 flex-1 overflow-hidden border-l border-black">
        <ChannelStrip s={{ n: "3", input: "入力 1", title: "ちとせ", pan: 0, gain: "0dB", panText: "<C>", level: 84, muted: true, color: GREEN, footer: "ちとせ", footerClass: "bg-[#14532f] text-white" }} />
        <BusGroup
          s={{ n: "4", title: "vocal", pan: -0.21, gain: "0dB", panText: "L21", level: 84, leds: 1, left: true, color: GREY }}
          footer="ちとせ"
        />
        <ChannelStrip s={{ n: "5", input: "入力 1", title: "ちとせコーラス", pan: 1, gain: "0dB", panText: "<R>", level: 84, color: GREEN, footer: "はm", footerClass: "bg-[#14532f] text-white" }} />
        <ChannelStrip s={{ n: "6", input: "入力 2", title: "カイネ", pan: 0, gain: "0dB", panText: "<C>", level: 84, muted: true, color: BLUE, footer: "カイネメイン", footerClass: "bg-[#86a5d2] text-[#10151c]" }} />
        <ChannelStrip s={{ n: "7", input: "入力 1", title: "カイネコーラス", pan: -1, gain: "0dB", panText: "<L>", level: 84, color: BLUE, footer: "カイネハモ", footerClass: "bg-[#86a5d2] text-[#10151c]" }} />
        <ChannelStrip s={{ n: "8", title: "vocal", pan: 0, gain: "-9.2", panText: "<C>", level: 60, leds: 2, color: GREY, footer: "ちとせコーラス", footerClass: "bg-[#18191b] text-[#dfe1e3]" }} />
        <BusGroup
          s={{ n: "11", title: "vocal", pan: 0.18, gain: "0dB", panText: "R18", level: 84, leds: 1, left: true, color: GREY }}
          footer="カイネ"
        />
      </div>
    </div>
  );
}

export default function App() {
  return (
    <div className="flex h-screen flex-col overflow-hidden bg-black font-['Liberation_Sans','Noto_Sans_CJK_JP',sans-serif] [font-feature-settings:'palt']">
      <TopStrip />
      <DetectionPanel />
      <div className="h-1 shrink-0 border-y border-black bg-[#5a6167]" />
      <Tracks />
      <BottomBar />
      <div className="h-1.5 shrink-0 border-y-2 border-black bg-[#5a6167]" />
      <Mixer />
    </div>
  );
}
